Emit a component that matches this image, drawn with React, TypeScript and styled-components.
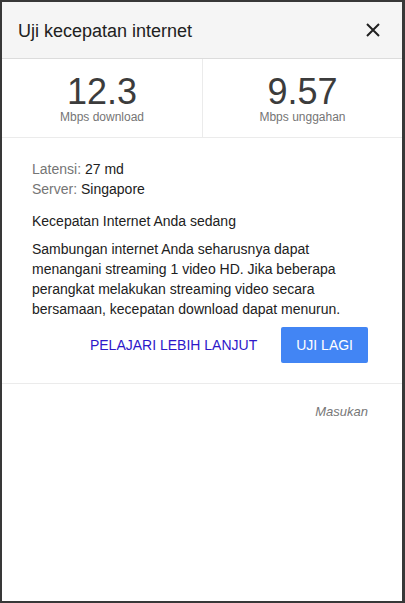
import styled, { createGlobalStyle } from "styled-components";

const Global = createGlobalStyle`
  html, body {
    margin: 0;
    padding: 0;
    background: #383838;
  }
  body {
    font-family: "Liberation Sans", Arial, sans-serif;
  }
`;

const Backdrop = styled.div`
  width: 405px;
  height: 603px;
  padding: 2px 3px 2px 2px;
  box-sizing: border-box;
  background: #383838;
`;

const Dialog = styled.div`
  width: 400px;
  height: 599px;
  background: #fff;
  display: flex;
  flex-direction: column;
`;

const Header = styled.div`
  height: 56px;
  background: #f5f5f5;
  border-bottom: 1px solid #dcdcdc;
  display: flex;
  align-items: center;
  justify-content: space-between;
  padding: 0 21px 0 16px;
`;

const Title = styled.h1`
  margin: 0;
  font-size: 18px;
  font-weight: 400;
  color: #212121;
  padding-top: 2px;
`;

const CloseButton = styled.button`
  border: 0;
  background: none;
  padding: 0;
  width: 16px;
  height: 16px;
  display: flex;
  cursor: pointer;
`;

const Stats = styled.div`
  display: grid;
  grid-template-columns: 1fr 1fr;
  border-bottom: 1px solid #ebebeb;
  height: 78px;
`;

const Stat = styled.div<{ $divider?: boolean }>`
  display: flex;
  flex-direction: column;
  align-items: center;
  padding-top: 18px;
  border-left: ${(p) => (p.$divider ? "1px solid #ebebeb" : "none")};
`;

const Value = styled.div`
  font-size: 36px;
  line-height: 30px;
  color: #3c3c3c;
`;

const Unit = styled.div`
  margin-top: 3px;
  font-size: 12px;
  line-height: 14px;
  color: #757575;
`;

const Body = styled.div`
  padding: 21px 34px 20px 30px;
  border-bottom: 1px solid #ebebeb;
`;

const InfoLine = styled.div`
  font-size: 14px;
  line-height: 20px;
  color: #212121;
`;

const Label = styled.span`
  color: #757575;
`;

const Paragraph = styled.p<{ $gap: number }>`
  margin: ${(p) => p.$gap}px 0 0;
  font-size: 14px;
  line-height: 20px;
  color: #212121;
`;

const Actions = styled.div`
  display: flex;
  justify-content: flex-end;
  align-items: center;
  gap: 24px;
  margin-top: 8px;
`;

const LinkButton = styled.a`
  font-size: 14px;
  color: #2d17c9;
  text-decoration: none;
`;

const PrimaryButton = styled.button`
  height: 36px;
  padding: 0 15px;
  border: 0;
  border-radius: 2px;
  background: #4285f4;
  color: #fff;
  font-family: inherit;
  font-size: 14px;
  cursor: pointer;
`;

const Footer = styled.div`
  display: flex;
  justify-content: flex-end;
  padding: 20px 34px 0 0;
`;

const Feedback = styled.span`
  font-size: 13px;
  font-style: italic;
  color: #777;
`;

export default function App() {
  return (
    <>
      <Global />
      <Backdrop>
        <Dialog>
          <Header>
            <Title>Uji kecepatan internet</Title>
            <CloseButton aria-label="Tutup">
              <svg width="16" height="16" viewBox="0 0 16 16">
                <path d="M2 2 L14 14 M14 2 L2 14" stroke="#212121" strokeWidth="2" />
              </svg>
            </CloseButton>
          </Header>
          <Stats>
            <Stat>
              <Value>12.3</Value>
              <Unit>Mbps download</Unit>
            </Stat>
            <Stat $divider>
              <Value>9.57</Value>
              <Unit>Mbps unggahan</Unit>
            </Stat>
          </Stats>
          <Body>
            <InfoLine>
              <Label>Latensi:</Label> 27 md
            </InfoLine>
            <InfoLine>
              <Label>Server:</Label> Singapore
            </InfoLine>
            <Paragraph $gap={12}>Kecepatan Internet Anda sedang</Paragraph>
            <Paragraph $gap={8}>
              Sambungan internet Anda seharusnya dapat menangani streaming 1 video HD. Jika
              beberapa perangkat melakukan streaming video secara bersamaan, kecepatan download
              dapat menurun.
            </Paragraph>
            <Actions>
              <LinkButton href="#">PELAJARI LEBIH LANJUT</LinkButton>
              <PrimaryButton>UJI LAGI</PrimaryButton>
            </Actions>
          </Body>
          <Footer>
            <Feedback>Masukan</Feedback>
          </Footer>
        </Dialog>
      </Backdrop>
    </>
  );
}
